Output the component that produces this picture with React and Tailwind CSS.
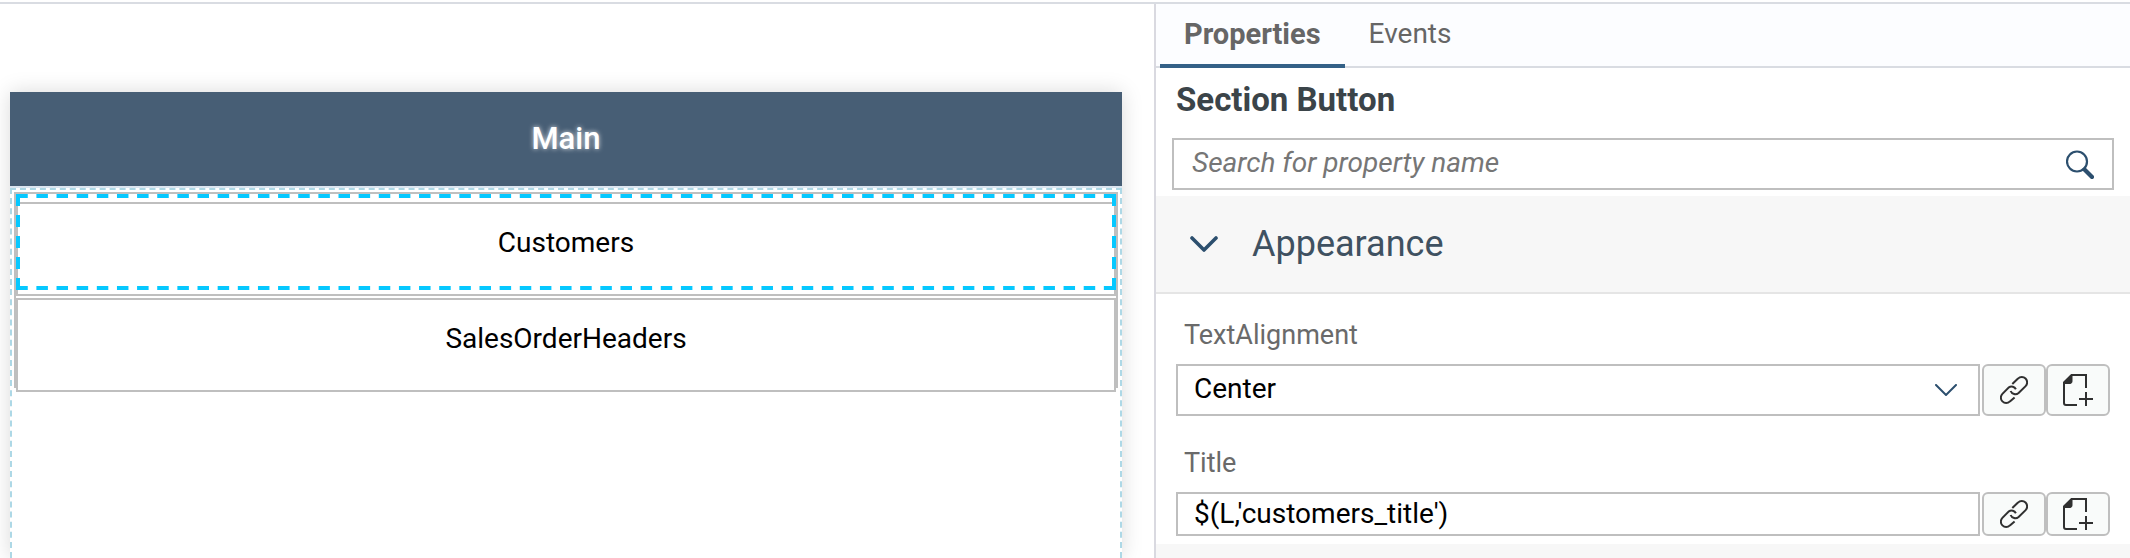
import React from "react";

const properties = [
  { id: "text-alignment", label: "TextAlignment", kind: "select", value: "Center" },
  { id: "title", label: "Title", kind: "text", value: "$(L,'customers_title')" },
];

function SearchIcon() {
  return (
    <svg viewBox="0 0 28 29" className="h-[29px] w-7" fill="none" stroke="#2c4f6e" aria-hidden="true">
      <circle cx="11" cy="11.5" r="10" strokeWidth="2.2" />
      <path d="M18.5 19.5 L26 27" strokeWidth="4.2" strokeLinecap="round" />
    </svg>
  );
}

function LinkIcon() {
  return (
    <svg viewBox="0 0 28 28" className="h-7 w-7" fill="none" stroke="#303030" strokeWidth="2" aria-hidden="true">
      <path d="M12.3 8 L18 2.6 A5.2 5.2 0 0 1 25.6 10.1 L18.6 16.9 A5 5 0 0 1 10.6 15" />
      <path d="M15.9 13.2 A5 5 0 0 0 8.9 11.3 L2.4 17.9 A5.2 5.2 0 0 0 9.9 25.4 L14.6 21.4" />
    </svg>
  );
}

function AddDocumentIcon() {
  return (
    <svg viewBox="0 0 30 32" className="h-8 w-[30px]" fill="none" stroke="#303030" strokeWidth="2" aria-hidden="true">
      <path d="M14 31 H3 Q1 31 1 29 V8.500 L8.500 1 H23 V14" />
      <path d="M1 9 L9 1 V7.500 Q9 9.500 7 9.500 H1 Z" fill="#303030" strokeWidth="1" />
      <path d="M23 18 V32 M16 25 H30" />
    </svg>
  );
}

function ActionButton({ label, children }) {
  return (
    <button
      type="button"
      aria-label={label}
      className="flex w-16 items-center justify-center rounded-md border-2 border-[#bfbfbf] bg-[#f9fbfa]"
    >
      {children}
    </button>
  );
}

function SectionButton({ label, selected }) {
  return (
    <div className={selected ? "relative pt-2" : "relative"}>
      <button
        type="button"
        className="flex h-[94px] w-full items-center justify-center border-2 border-[#bfbfbf] pb-3 text-[28px] leading-9 text-black"
      >
        {label}
      </button>
      {selected && (
        <div className="pointer-events-none absolute inset-x-0 top-0 bottom-1.5 p-1.5 [background-image:linear-gradient(90deg,#06c8ff_30%,transparent_30%_70%,#06c8ff_70%),linear-gradient(90deg,#06c8ff_30%,transparent_30%_70%,#06c8ff_70%),linear-gradient(#06c8ff_30%,transparent_30%_70%,#06c8ff_70%),linear-gradient(#06c8ff_30%,transparent_30%_70%,#06c8ff_70%)] [background-origin:content-box] [background-position:0_-6px,0_calc(100%+6px),-6px_0,calc(100%+6px)_0] [background-repeat:round_no-repeat,round_no-repeat,no-repeat_round,no-repeat_round] [background-size:20px_4px,20px_4px,4px_20px,4px_20px]" />
      )}
    </div>
  );
}

function Canvas() {
  return (
    <main className="flex flex-col pt-[88px] pr-8 pl-2.5">
      <section className="flex flex-1 flex-col bg-white shadow-[0_0_20px_rgba(0,0,0,0.15)]">
        <header className="flex h-24 items-center justify-center border-b-2 border-[#dbe6f1] bg-[#475e75]">
          <h1 className="text-[31px] leading-10 font-medium text-white [text-shadow:0_0_5px_rgba(255,255,255,0.8)]">Main</h1>
        </header>
        <div className="flex-1 border-2 border-b-0 border-dashed border-[#add8e6] p-0.5">
          <div className="flex h-[196px] flex-col gap-0.5 border-x-2 border-t-2 border-[#bfbfbf]">
            <SectionButton label="Customers" selected />
            <SectionButton label="SalesOrderHeaders" />
          </div>
        </div>
      </section>
    </main>
  );
}

function PropertyRow({ id, label, kind, value }) {
  return (
    <div>
      <label htmlFor={id} className="block pl-2 text-[27px] leading-9 text-[#6a6a6a]">
        {label}
      </label>
      <div className={kind === "select" ? "mt-[11px] flex h-[52px]" : "mt-[11px] flex h-11"}>
        <div className="relative mr-0.5 flex min-w-0 flex-1">
          {kind === "select" ? (
            <>
              <select
                id={id}
                defaultValue={value}
                className="w-full appearance-none rounded-none border-2 border-[#bfbfbf] bg-white px-4 pb-0.5 text-[28px] leading-9 text-black"
              >
                <option>{value}</option>
              </select>
              <svg
                viewBox="0 0 22 12"
                className="pointer-events-none absolute top-5 right-[23px] h-3 w-[22px]"
                fill="none"
                stroke="#2c4f6e"
                strokeWidth="2"
                strokeLinecap="round"
                aria-hidden="true"
              >
                <path d="M1 1 L11 11 L21 1" />
              </svg>
            </>
          ) : (
            <input
              id={id}
              type="text"
              defaultValue={value}
              className="w-full border-2 border-[#bfbfbf] bg-white px-4 text-[28px] leading-9 text-black"
            />
          )}
        </div>
        <ActionButton label={`Bind ${label}`}>
          <LinkIcon />
        </ActionButton>
        <ActionButton label={`Create rule for ${label}`}>
          <AddDocumentIcon />
        </ActionButton>
      </div>
    </div>
  );
}

function PropertiesPanel() {
  return (
    <aside className="flex flex-col border-l-2 border-[#d9d9e0]">
      <nav className="flex h-16 border-b-2 border-[#d9dce2] bg-[#fcfdff] pl-1 text-[28px] leading-9 text-[#666]">
        <button type="button" className="-mb-0.5 border-b-4 border-[#346187] px-6 text-[29px] font-bold">
          Properties
        </button>
        <button type="button" className="px-6 pb-0.5">
          Events
        </button>
      </nav>
      <div className="px-4 pt-3 pb-1.5">
        <h2 className="pl-1 text-[33px] leading-10 font-bold text-[#3b4449]">Section Button</h2>
        <div className="mt-[18px] flex h-[52px] items-center border-2 border-[#bfbfbf] bg-white pr-[18px]">
          <input
            type="search"
            aria-label="Search for property name"
            placeholder="Search for property name"
            className="min-w-0 flex-1 pb-0.5 pl-[18px] text-[28px] leading-9 italic outline-none placeholder:text-[#767676]"
          />
          <button type="button" aria-label="Search">
            <SearchIcon />
          </button>
        </div>
      </div>
      <button
        type="button"
        aria-expanded="true"
        className="flex h-[98px] items-center gap-[34px] border-b-2 border-[#e5e5e5] bg-[#f7f7f7] pl-[34px] text-4xl leading-10 text-[#3f5161]"
      >
        <svg
          viewBox="0 0 28 16"
          className="h-4 w-7"
          fill="none"
          stroke="#2c4f6e"
          strokeWidth="3.6"
          strokeLinecap="round"
          strokeLinejoin="round"
          aria-hidden="true"
        >
          <path d="M2 2 L14 14 L26 2" />
        </svg>
        Appearance
      </button>
      <div className="flex flex-col gap-[29px] pt-[23px] pr-5 pb-2 pl-5">
        {properties.map((property) => (
          <PropertyRow key={property.id} {...property} />
        ))}
      </div>
      <div className="flex-1 bg-[#f7f7f7]" />
    </aside>
  );
}

export default function App() {
  return (
    <div className="flex h-screen flex-col overflow-hidden bg-white pt-0.5 font-[Roboto,'Liberation_Sans',sans-serif]">
      <div className="grid min-h-0 flex-1 grid-cols-[1154fr_976fr] border-t-2 border-[#d9dce2]">
        <Canvas />
        <PropertiesPanel />
      </div>
    </div>
  );
}
